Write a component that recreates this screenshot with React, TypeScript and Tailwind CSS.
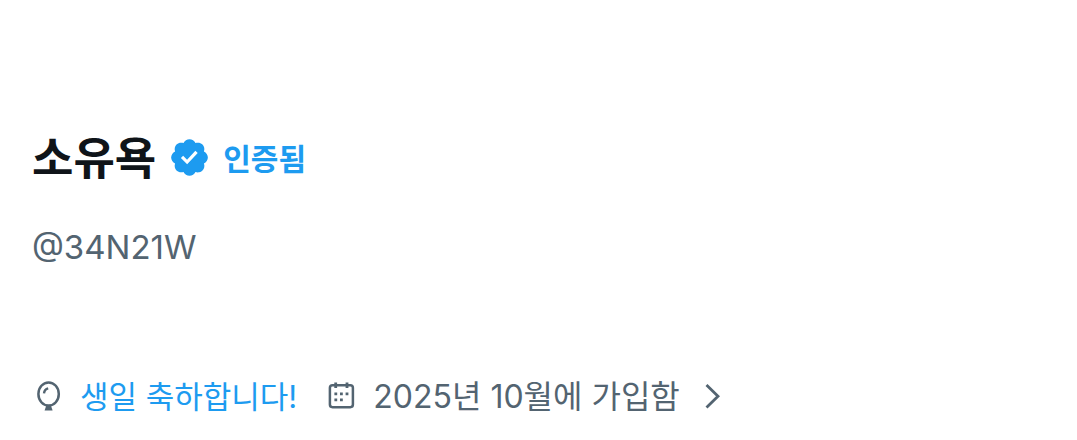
function VerifiedBadge() {
  return (
    <svg viewBox="0 0 22 22" className="mb-1 size-[43px] shrink-0 fill-[#1d9bf0]" aria-hidden="true">
      <path d="M20.396 11c-.018-.646-.215-1.275-.57-1.816-.354-.54-.852-.972-1.438-1.246.223-.607.27-1.264.14-1.897-.131-.634-.437-1.218-.882-1.687-.47-.445-1.053-.75-1.687-.882-.633-.13-1.29-.083-1.897.14-.273-.587-.704-1.086-1.245-1.44S11.647 1.62 11 1.604c-.646.017-1.273.213-1.813.568s-.969.854-1.24 1.44c-.608-.223-1.267-.272-1.902-.14-.635.13-1.22.436-1.69.882-.445.47-.749 1.055-.878 1.688-.13.633-.08 1.29.144 1.896-.587.274-1.087.705-1.443 1.245-.356.54-.555 1.17-.574 1.817.02.647.218 1.276.574 1.817.356.54.856.972 1.443 1.245-.224.606-.274 1.263-.144 1.896.13.634.433 1.218.877 1.688.47.443 1.054.747 1.687.878.633.132 1.29.084 1.897-.136.274.586.705 1.084 1.246 1.439.54.354 1.17.551 1.816.569.647-.016 1.276-.213 1.817-.567s.972-.854 1.245-1.44c.604.239 1.266.296 1.903.164.636-.132 1.22-.447 1.68-.907.46-.46.776-1.044.908-1.681s.075-1.299-.165-1.903c.586-.274 1.084-.705 1.439-1.246.354-.54.551-1.17.569-1.816zM9.8 14.5l-3.2-3.2 1.15-1.15 2 2 4.25-4.6 1.2 1.1z" />
    </svg>
  );
}

function BalloonIcon() {
  return (
    <svg viewBox="0 0 32 32" className="size-8 shrink-0" fill="none" stroke="currentColor" aria-hidden="true">
      <ellipse cx="16.6" cy="13" rx="10.2" ry="11.6" strokeWidth="2.5" />
      <path d="M12 12.4c.3-2.7 1.7-4.4 4.2-5" strokeWidth="2.4" />
      <path d="M14.4 24h4.4l1.8 5.4h-8z" fill="currentColor" stroke="none" />
    </svg>
  );
}

function CalendarIcon() {
  return (
    <svg viewBox="0 0 32 32" className="size-8 shrink-0" fill="none" stroke="currentColor" aria-hidden="true">
      <rect x="4.9" y="4.2" width="23" height="22" rx="2.6" strokeWidth="2.5" />
      <path d="M10.7 1.4v5.5M22 1.4v5.5" strokeWidth="2.8" />
      <path d="M9.4 12.8h2.8M15 12.8h2.8M20.6 12.8h2.8M9.4 18.8h2.8M15 18.8h2.8" strokeWidth="2.8" />
    </svg>
  );
}

function ChevronIcon() {
  return (
    <svg viewBox="0 0 16 26" className="h-[26px] w-4 shrink-0" fill="none" stroke="currentColor" strokeWidth="2.8" aria-hidden="true">
      <path d="M2.5 1 14 12.2 2.5 23.4" />
    </svg>
  );
}

export default function App() {
  return (
    <main className="min-h-screen bg-white px-8 pt-[135px] pb-6 font-['Inter','Noto_Sans_CJK_KR',sans-serif] text-[#536471]">
      <header>
        <div className="flex items-center">
          <h1 className="text-[45px] leading-[48px] font-bold text-[#0f1419]">소유욕</h1>
          <div className="ml-3 flex items-center gap-3 text-[#1d9bf0]">
            <VerifiedBadge />
            <span className="text-[30px] leading-[48px] font-bold">인증됨</span>
          </div>
        </div>
        <p className="mt-11 text-[33px] leading-10">@34N21W</p>
      </header>
      <div className="mt-[110px] flex items-center whitespace-nowrap text-[32px] leading-10">
        <BalloonIcon />
        <a href="#birthday" className="ml-4 text-[31px] text-[#1d9bf0]">생일 축하합니다!</a>
        <button type="button" className="ml-7 flex items-center">
          <CalendarIcon />
          <span className="mr-6 ml-4">2025년 10월에 가입함</span>
          <ChevronIcon />
        </button>
      </div>
    </main>
  );
}
